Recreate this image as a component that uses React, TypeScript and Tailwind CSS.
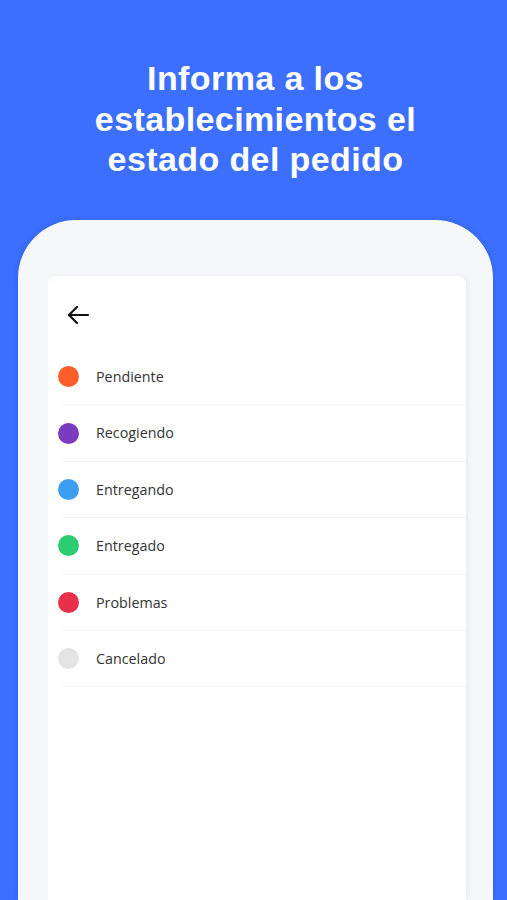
const STATUSES = [
  { label: 'Pendiente', color: 'bg-[#FF5E2C]' },
  { label: 'Recogiendo', color: 'bg-[#7B3BBE]' },
  { label: 'Entregando', color: 'bg-[#3C9DF2]' },
  { label: 'Entregado', color: 'bg-[#2ECC71]' },
  { label: 'Problemas', color: 'bg-[#E9304B]' },
  { label: 'Cancelado', color: 'bg-[#E4E4E4]' },
]

function BackArrow() {
  return (
    <svg width="24" height="22" viewBox="0 0 24 22" fill="none" stroke="#111" strokeWidth="2.2" strokeLinecap="round" strokeLinejoin="round">
      <path d="M22 11H3" />
      <path d="M11 3L3 11L11 19" />
    </svg>
  )
}

function App() {
  return (
    <div className="w-full h-[900px] bg-[#3C6FFE] overflow-hidden flex flex-col">
      <h1 className="pt-[58px] pl-[4px] text-center text-white font-bold text-[34px] leading-[40.5px] tracking-[0.4px] font-['Liberation_Sans',Arial,sans-serif]">
        Informa a los
        <br />
        establecimientos el
        <br />
        estado del pedido
      </h1>

      <div className="mt-[40px] ml-[18px] w-[475px] flex-1 rounded-t-[58px] bg-[#F6F7F9] pl-[30px] pr-[27px] pt-[56px] shadow-[0_0_6px_rgba(0,0,0,0.12)]">
        <div className="h-full bg-white rounded-t-[8px] shadow-[2px_0_6px_rgba(0,0,0,0.05)] font-['Open_Sans',sans-serif]">
          <div className="h-[73.5px] flex items-center pl-[18px] pt-[6px]">
            <BackArrow />
          </div>
          <ul>
            {STATUSES.map((s) => (
              <li key={s.label} className="h-[56.4px] flex flex-col">
                <div className="flex-1 flex items-center pl-[10px]">
                  <span className={`w-[21px] h-[21px] rounded-full ${s.color}`} />
                  <span className="ml-[17px] text-[14.3px] text-[#333]">{s.label}</span>
                </div>
                <div className="ml-[15px] h-px bg-[#F1F1F1]" />
              </li>
            ))}
          </ul>
        </div>
      </div>
    </div>
  )
}

export default App
